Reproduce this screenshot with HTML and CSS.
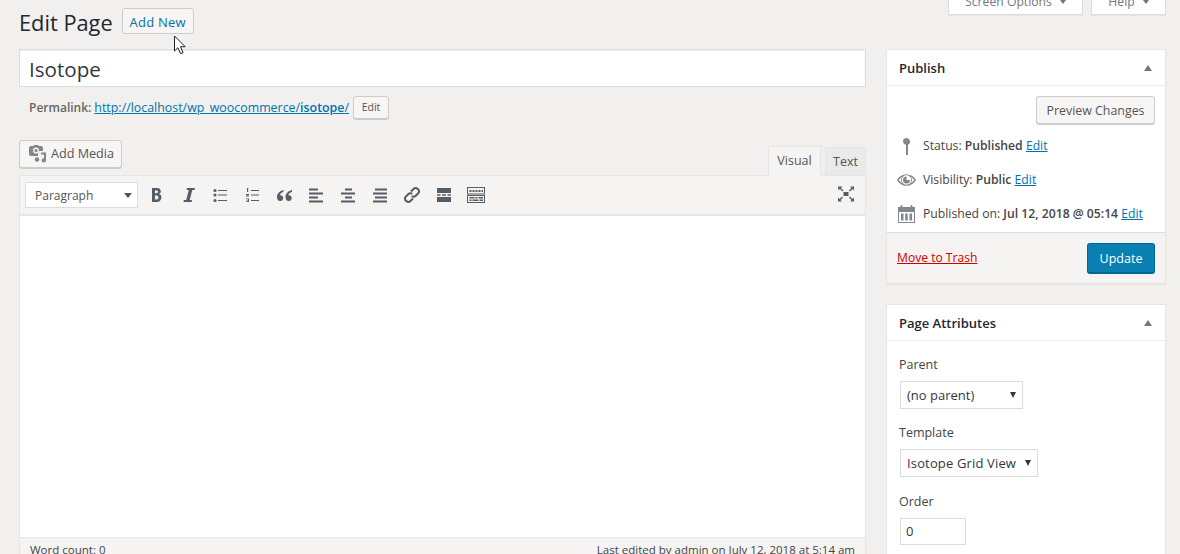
FILE: index.html
```html
<!DOCTYPE html>
<html lang="en">
<head>
<meta charset="utf-8">
<title>Edit Page</title>
<link rel="stylesheet" href="styles.css">
</head>
<body>
<div class="page">
  <main class="main">
    <div class="heading">
      <h1>Edit Page</h1>
      <a class="btn add-new">Add New</a>
      <svg class="cursor" width="15" height="20" viewBox="0 0 15 20"><path d="M1.500 1v15l3.400-3.300 2.700 6 2.500-1.100-2.600-5.900h4.700z" fill="#fff" stroke="#222" stroke-width="1"/></svg>
    </div>
    <div class="title-input">Isotope</div>
    <div class="permalink">
      <strong>Permalink:</strong>
      <a class="link url" href="#">http://localhost/wp_woocommerce/<b>isotope</b>/</a>
      <a class="btn btn-small">Edit</a>
    </div>
    <div class="editor-tools">
      <a class="btn add-media">
        <svg width="20" height="20" viewBox="0 0 20 20"><path fill="#82878c" fill-rule="evenodd" d="M3 2h2l1-1h4l1 1h2a2 2 0 0 1 2 2v3h-3.500a1.500 1.500 0 0 0-1.500 1.500V12H3a2 2 0 0 1-2-2V4a2 2 0 0 1 2-2zm5 1.500a3 3 0 1 0 0 6 3 3 0 0 0 0-6z"/><circle cx="8" cy="6.500" r="1.600" fill="#82878c"/><path fill="#82878c" d="M13 8.500h5v7.800a2.200 2.200 0 1 1-2-2.100v-3.700h-3z"/><circle cx="9" cy="15.500" r="2.300" fill="#82878c"/></svg>
        Add Media
      </a>
      <div class="tabs">
        <a class="tab tab-active">Visual</a>
        <a class="tab">Text</a>
      </div>
    </div>
    <div class="editor">
      <div class="toolbar">
        <div class="format">Paragraph<i class="caret"></i></div>
        <svg class="tool" viewBox="0 0 20 20"><path fill="#555d66" fill-rule="evenodd" d="M6 3h5c2.400 0 3.800 1.200 3.800 3.300 0 1.300-.7 2.300-1.900 2.700 1.500.3 2.500 1.500 2.500 3.200 0 3-2.100 4.800-4.600 4.800H6zm3 2.500v2.700h1.500c1 0 1.500-.5 1.500-1.400 0-.9-.5-1.300-1.500-1.300zm0 5v3.900h1.800c1.100 0 1.700-.7 1.700-1.900 0-1.300-.7-2-1.800-2z"/></svg>
        <svg class="tool" viewBox="0 0 20 20"><path fill="#555d66" d="M9 3h8l-.4 2h-2.300L11.700 15H14l-.4 2H5.500l.4-2h2.300L10.800 5H8.600z"/></svg>
        <svg class="tool" viewBox="0 0 20 20"><g fill="#555d66"><circle cx="5" cy="5.500" r="1.600"/><circle cx="5" cy="10" r="1.600"/><circle cx="5" cy="15.500" r="1.600"/><path d="M8 5h9v1H8zM8 9.500h9v1H8zM8 15h9v1H8z"/></g></svg>
        <svg class="tool" viewBox="0 0 20 20"><g fill="#555d66"><path d="M9 5h8v1H9zM9 9.500h8v1H9zM9 15h8v1H9z"/><path d="M5 3h1.200v4H5zM4 9h3v1H5.200v.6H7v.9H4v-1h1.800V10H4zM4 13.500h3V17H4v-.8h2v-.6H4.500v-.7H6V14.300H4z"/></g></svg>
        <svg class="tool" viewBox="0 0 20 20"><path fill="#555d66" d="M9.500 5C5.600 6.200 3 8.600 3 12c0 2.400 1.300 4 3.200 4 1.800 0 3-1.300 3-3 0-1.600-1.100-2.800-2.600-2.800-.3 0-.6 0-.8.100.3-1.300 1.700-2.800 3.700-3.600zM18 5c-3.900 1.200-6.500 3.600-6.500 7 0 2.400 1.300 4 3.200 4 1.800 0 3-1.300 3-3 0-1.600-1.100-2.800-2.600-2.800-.3 0-.6 0-.8.100.3-1.300 1.700-2.800 3.700-3.600z"/></svg>
        <svg class="tool" viewBox="0 0 20 20"><path fill="#555d66" d="M3 3.500h9v2H3zM3 7.500h14v2H3zM3 11.500h9v2H3zM3 15.500h14v2H3z"/></svg>
        <svg class="tool" viewBox="0 0 20 20"><path fill="#555d66" d="M7 3.500h7v2H7zM3 7.500h14v2H3zM7 11.500h7v2H7zM3 15.500h14v2H3z"/></svg>
        <svg class="tool" viewBox="0 0 20 20"><path fill="#555d66" d="M5 3.500h12v2H5zM3 7.500h14v2H3zM5 11.500h12v2H5zM3 15.500h14v2H3z"/></svg>
        <svg class="tool" viewBox="0 0 20 20"><g fill="none" stroke="#555d66" stroke-width="2"><path d="M9 6.500l2.800-2.800a2.600 2.600 0 0 1 3.700 0l.8.800a2.600 2.600 0 0 1 0 3.700L13.500 11a2.600 2.600 0 0 1-3.700 0"/><path d="M11 13.500l-2.800 2.800a2.600 2.600 0 0 1-3.700 0l-.8-.8a2.600 2.600 0 0 1 0-3.700L6.500 9a2.600 2.600 0 0 1 3.700 0"/></g></svg>
        <svg class="tool" viewBox="0 0 20 20"><path fill="#555d66" d="M3 3h14v5H3zM3 12h14v5H3zM3 9.300h3.500v1.400H3zM8 9.300h4v1.400H8zM13.500 9.300H17v1.400h-3.500z"/></svg>
        <svg class="tool" viewBox="0 0 20 20"><g fill="#555d66" fill-rule="evenodd"><path d="M1 2h18v7.500H1zm1 1v5.500h16V3z"/><path d="M1 10h18v8H1zm1 1v6h16v-6z"/><path d="M3.500 5h2v2h-2zM6.500 5h2v2h-2zM9.500 5h2v2h-2zM12.500 5h2v2h-2zM15.500 5h1.500v2h-1.500zM3.500 12h5v1.500h-5zM9.500 12h2v1.500h-2zM12.500 12h4.500v1.500h-4.500zM3.500 14.500h2V16h-2zM6.500 14.500h6V16h-6zM13.500 14.500H17V16h-3.500z"/></g></svg>
        <svg class="tool tool-full" viewBox="0 0 20 20"><g fill="#555d66"><path d="M7.500 8h5v4h-5z"/><path d="M2 2.500h4.500L5 4l2.500 2.500-1 1L4 5 2.500 6.500zM18 2.500v4L16.500 5 14 7.500l-1-1L15.500 4 14 2.500zM2 17.500v-4L3.500 15 6 12.500l1 1L4.500 16 6 17.500zM18 17.500h-4l1.500-1.500L13 13.500l1-1 2.500 2.500 1.500-1.500z"/></g></svg>
      </div>
      <div class="editor-body"></div>
      <div class="status">
        <span>Word count: 0</span>
        <span>Last edited by admin on July 12, 2018 at 5:14 am</span>
      </div>
    </div>
  </main>
  <aside class="side">
    <div class="meta-links">
      <a class="meta-tab meta-screen">Screen Options<i class="caret caret-small"></i></a>
      <a class="meta-tab meta-help">Help<i class="caret caret-small"></i></a>
    </div>
    <section class="box">
      <h2 class="box-title">Publish<i class="caret-up"></i></h2>
      <div class="publish-body">
        <div class="preview-row"><a class="btn preview">Preview Changes</a></div>
        <div class="info-row">
          <svg class="info-icon" viewBox="0 0 20 20"><path fill="#82878c" d="M6 5.500a3.500 3.500 0 1 1 5 3.160V19H9V8.660A3.500 3.500 0 0 1 6 5.500z"/></svg>
          <span>Status: <b>Published</b> <a class="link" href="#">Edit</a></span>
        </div>
        <div class="info-row">
          <svg class="info-icon" viewBox="0 0 20 20"><path fill="#82878c" fill-rule="evenodd" d="M0 10c2.100-3.700 5.600-5.800 9.500-5.800S17 6.300 19 10c-2 3.700-5.600 5.800-9.500 5.800S2.100 13.700 0 10zm9.500-4.700c-2.600 0-4.700 2.100-4.700 4.700s2.100 4.700 4.700 4.700 4.700-2.100 4.700-4.700-2.100-4.700-4.700-4.700zM1.800 10c1 1.500 2.300 2.600 3.800 3.300C4.700 12.400 4 11.300 4 10s.7-2.400 1.600-3.300C4.100 7.400 2.800 8.500 1.800 10zm15.400 0c-1-1.500-2.300-2.600-3.800-3.300.9.900 1.600 2 1.600 3.300s-.7 2.400-1.600 3.300c1.500-.7 2.800-1.800 3.800-3.300z"/><path fill="#82878c" d="M9.500 6.500a3.500 3.500 0 1 0 3.500 3.500H9.500z"/></svg>
          <span>Visibility: <b>Public</b> <a class="link" href="#">Edit</a></span>
        </div>
        <div class="info-row">
          <svg class="info-icon" viewBox="0 0 20 20"><path fill="#82878c" fill-rule="evenodd" d="M1 3h2.500V2a1 1 0 0 1 2 0v1h8V2a1 1 0 0 1 2 0v1H18v16H1zm1 5v10h15V8z"/><path fill="#82878c" d="M4 9.500h2.500V16.500H4zM8.200 9.500h2.500V16.500H8.200zM12.500 9.500H15V16.500h-2.500z"/></svg>
          <span>Published on: <b>Jul 12, 2018 @ 05:14</b> <a class="link" href="#">Edit</a></span>
        </div>
      </div>
      <div class="publish-actions">
        <a class="trash" href="#">Move to Trash</a>
        <a class="btn-primary">Update</a>
      </div>
    </section>
    <section class="box">
      <h2 class="box-title">Page Attributes<i class="caret-up"></i></h2>
      <div class="attrs">
        <p class="attr-label">Parent</p>
        <div class="select select-parent">(no parent)<i class="caret caret-dark"></i></div>
        <p class="attr-label">Template</p>
        <div class="select select-template">Isotope Grid View<i class="caret caret-dark"></i></div>
        <p class="attr-label">Order</p>
        <div class="number">0</div>
      </div>
    </section>
  </aside>
</div>
</body>
</html>
```
FILE: styles.css
```css
* { box-sizing: border-box; }
html, body { margin: 0; height: 554px; overflow: hidden; }
body {
  background: #f1f0ef;
  color: #444;
  font-family: "Open Sans", "Liberation Sans", sans-serif;
  font-size: 13px;
  line-height: 18px;
}
a { color: inherit; text-decoration: none; }
.link { color: #0073aa; text-decoration: underline; }
.page {
  display: grid;
  grid-template-columns: 847px 280px;
  column-gap: 20px;
  padding-left: 19px;
  align-items: start;
}
.main { min-width: 0; }
.heading {
  position: relative;
  display: flex;
  align-items: center;
  height: 49px;
  padding-bottom: 5px;
}
h1 {
  margin: 0;
  font-size: 21.8px;
  font-weight: 400;
  color: #23282d;
  line-height: 29px;
}
.btn {
  display: inline-block;
  background: #f7f6f5;
  border: 1px solid #ccc;
  border-radius: 3px;
  box-shadow: 0 1px 0 #ccc;
  color: #555;
  white-space: nowrap;
}
.add-new {
  margin: -3px 0 0 9px;
  width: 72px;
  height: 26px;
  line-height: 26px;
  text-align: center;
  color: #0073aa;
  font-weight: 400;
  font-size: 13px;
  letter-spacing: .25px;
  box-shadow: none;
}
.cursor { position: absolute; left: 154px; top: 35px; }
.title-input {
  height: 38px;
  background: #fff;
  border: 1px solid #ddd;
  box-shadow: inset 0 1px 2px rgba(0,0,0,.07);
  padding-left: 9px;
  font-size: 20.6px;
  line-height: 38px;
  color: #32373c;
}
.permalink {
  display: flex;
  align-items: center;
  height: 23px;
  margin-top: 9px;
  padding-left: 10px;
  color: #666;
}
.permalink strong { font-weight: 600; font-size: 12px; margin-right: 3px; }
.permalink b { font-weight: 600; }
.url { font-size: 12.4px; }
.btn-small {
  margin-left: 4px;
  width: 36px;
  height: 23px;
  line-height: 21px;
  text-align: center;
  font-size: 10.5px;
}
.editor-tools {
  display: flex;
  justify-content: space-between;
  align-items: flex-end;
  margin-top: 21px;
  height: 35px;
}
.add-media {
  display: flex;
  align-items: center;
  gap: 3px;
  align-self: flex-start;
  width: 103px;
  height: 28px;
  padding-left: 8px;
  font-size: 12.6px;
}
.add-media svg { width: 20px; height: 20px; flex: none; }
.tabs { display: flex; gap: 4px; align-items: flex-end; margin-bottom: -1px; position: relative; }
.tab {
  height: 29px;
  line-height: 27px;
  background: #ebeaea;
  border: 1px solid #e5e5e5;
  color: #555;
  text-align: center;
  width: 41px;
  font-size: 12.5px;
}
.tab-active {
  width: 53px;
  height: 30px;
  background: #f5f4f3;
  border-bottom-color: #f5f4f3;
}
.editor {
  background: #fff;
  border: 1px solid #e5e5e5;
  height: 400px;
}
.toolbar {
  display: flex;
  align-items: center;
  height: 40px;
  background: #f5f4f3;
  border-bottom: 2px solid #e5e5e5;
  padding: 0 0 0 5px;
  gap: 12px;
}
.format {
  display: flex;
  align-items: center;
  justify-content: space-between;
  width: 113px;
  height: 26px;
  margin-right: -4px;
  background: #fff;
  border: 1px solid #ddd;
  padding: 1px 5px 0 9px;
  color: #555;
  font-size: 12px;
}
.caret {
  display: block;
  width: 0;
  height: 0;
  border-left: 4px solid transparent;
  border-right: 4px solid transparent;
  border-top: 5px solid #555;
}
.caret-small { border-width: 4px 3px 0; border-top-color: #72777c; margin-left: 8px; }
.caret-dark { border-width: 6px 3px 0; border-top-color: #32373c; }
.tool { width: 20px; height: 20px; flex: none; }
.tool-full { margin-left: auto; margin-right: 9px; margin-top: -3px; }
.editor-body { height: 321px; background: #fff; }
.status {
  display: flex;
  justify-content: space-between;
  height: 40px;
  background: #f5f4f3;
  border-top: 1px solid #e5e5e5;
  padding: 3px 10px;
  font-size: 11.5px;
  line-height: 18px;
  color: #444;
}
.side { min-width: 0; }
.meta-links {
  display: flex;
  justify-content: flex-end;
  gap: 8px;
  height: 16px;
  margin-bottom: 33px;
  overflow: hidden;
}
.meta-tab {
  display: flex;
  align-items: center;
  justify-content: center;
  flex: none;
  height: 15px;
  background: #fff;
  border: 1px solid #ddd;
  border-top: 0;
  box-shadow: 0 1px 1px rgba(0,0,0,.04);
  color: #72777c;
  line-height: 8px;
  font-size: 12.2px;
  padding-bottom: 11px;
  overflow: hidden;
}
.meta-screen { width: 135px; }
.meta-help { width: 75px; }
.box {
  background: #fff;
  border: 1px solid #e5e5e5;
  box-shadow: 0 1px 1px rgba(0,0,0,.04);
  margin-bottom: 20px;
}
.box-title {
  display: flex;
  align-items: center;
  justify-content: space-between;
  height: 36px;
  margin: 0;
  padding: 1px 13px 0 12px;
  border-bottom: 1px solid #eee;
  font-size: 13px;
  font-weight: 600;
  color: #23282d;
}
.caret-up {
  display: block;
  width: 0;
  height: 0;
  border-left: 4px solid transparent;
  border-right: 4px solid transparent;
  border-bottom: 6px solid #72777c;
}
.publish-body { height: 146px; padding: 10px 10px 0 10px; }
.preview-row { display: flex; justify-content: flex-end; height: 33px; }
.preview { width: 119px; height: 28px; line-height: 27px; text-align: center; font-size: 12.4px; }
.info-row {
  display: flex;
  align-items: center;
  height: 34px;
  color: #444;
  font-size: 12.2px;
  white-space: nowrap;
}
.info-row b { font-weight: 600; }
.info-icon { width: 20px; height: 20px; flex: none; margin-right: 6px; }
.publish-actions {
  display: flex;
  align-items: center;
  justify-content: space-between;
  height: 51px;
  background: #f5f4f3;
  border-top: 1px solid #ddd;
  padding: 0 10px;
}
.trash { color: #c00; text-decoration: underline; font-size: 12.1px; }
.btn-primary {
  width: 68px;
  height: 31px;
  line-height: 29px;
  text-align: center;
  background: #0a7fb2;
  border: 1px solid #006799;
  border-bottom-width: 2px;
  border-radius: 3px;
  color: #fff;
  font-size: 12.5px;
}
.attrs { padding: 0 12px 20px; }
.attr-label { margin: 0; padding-top: 15px; height: 40px; font-size: 12.5px; color: #444; font-weight: 400; }
.select {
  display: flex;
  align-items: center;
  justify-content: space-between;
  height: 28px;
  margin-left: 1px;
  background: #fff;
  border: 1px solid #ddd;
  padding: 0 6px 0 6px;
  color: #32373c;
  font-size: 13px;
}
.select-parent { width: 123px; }
.select-template { width: 138px; margin-bottom: 1px; letter-spacing: .15px; }
.number {
  width: 66px;
  height: 27px;
  margin-left: 1px;
  background: #fff;
  border: 1px solid #ddd;
  padding-left: 5px;
  line-height: 25px;
  color: #32373c;
}
```
